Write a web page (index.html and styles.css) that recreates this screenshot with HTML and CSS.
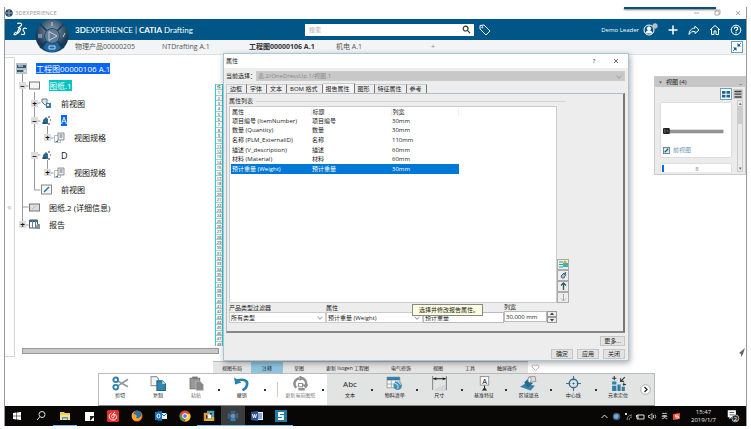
FILE: index.html
```html
<!DOCTYPE html>
<html lang="zh-CN">
<head>
    <meta charset="UTF-8" />
    <meta name="viewport" content="width=device-width, initial-scale=1" />
    <title>3DEXPERIENCE</title>
    <link rel="stylesheet" href="styles.css">
</head>
<body>
    <div class="screen">
        <div class="titlebar">
            <svg class="title-icon" viewBox="0 0 8 8"><circle cx="4" cy="4" r="3.8" fill="#2c4b68"/><path d="M1 4h6M4 1v6" stroke="#8fa9bf"/></svg>
            <span>3DEXPERIENCE</span>
            <div class="accent"></div>
            <svg class="win-controls" viewBox="0 0 60 12" fill="none" stroke="#999" stroke-width=".8"><path d="M8 6h5M50 4l4 4M54 4l-4 4"/><path d="M29 4h4v4h-4zM30 4V3h4v4h-1"/></svg>
        </div>

        <header class="topbar">
            <svg class="ds-logo" viewBox="0 0 16 16" fill="none" stroke="#fff" stroke-width="1.2" stroke-linecap="round"><path d="M5 1.5c3-1 6 .5 3 3L6 6M5.500 6c4-1 3 5-3 7.500-2 .7-2-1 .5-2.500M7 6L4 12"/><path d="M14.500 7c-3-1.500-5 1-3 3s1 4-2.500 3"/></svg>
            <h1><b>3D</b>EXPERIENCE | <b>CATIA</b> Drafting</h1>
            <form class="search">
                <input type="text" aria-label="搜索" placeholder="搜索">
                <button type="button" aria-label="搜索"><svg viewBox="0 0 10 10" fill="none" stroke="#333" stroke-width="1.3"><circle cx="4" cy="4" r="2.7"/><path d="M6 6l3 3"/></svg></button>
            </form>
            <button class="icon-btn tag" aria-label="标签"><svg viewBox="0 0 12 12" fill="none" stroke="#fff"><path d="M1 1.500l4-.5 6 6-4 4-6-6z"/><circle cx="3.300" cy="3.300" r=".6"/></svg></button>
            <div class="user">
                <span>Demo Leader</span>
                <button class="icon-btn avatar" aria-label="用户"><svg viewBox="0 0 15 13" fill="none" stroke="#fff"><circle cx="6" cy="7" r="5"/><circle cx="6" cy="5.500" r="1.700" fill="#fff"/><path d="M3 10c0-3 6-3 6 0z" fill="#fff"/><circle cx="12" cy="3" r="2.400" fill="#bbb" stroke="#ccc" stroke-width=".5"/></svg></button>
                <button class="icon-btn" aria-label="添加"><svg viewBox="0 0 12 12" stroke="#fff" stroke-width="1.500"><path d="M6 1.500v9M1.500 6h9"/></svg></button>
                <button class="icon-btn" aria-label="共享"><svg viewBox="0 0 12 12" fill="none" stroke="#fff"><path d="M7 2l4 4-4 3.500V7.500C4 7 2.500 8.500 1 10.500 1 7 3 4.500 7 4z"/></svg></button>
                <button class="icon-btn" aria-label="主页"><svg viewBox="0 0 12 12" fill="none" stroke="#fff"><path d="M1 6l5-4.500L11 6M2.500 5v5.500h2.500V7h2v3.500h2.500V5"/></svg></button>
                <button class="icon-btn" aria-label="帮助"><svg viewBox="0 0 12 12" fill="none" stroke="#fff"><circle cx="6" cy="6" r="4.800"/><path d="M4.300 4.800c0-2.200 3.400-2.200 3.400 0C7.700 6 6 6 6 7.200M6 8.200v1.200" stroke-width="1.200"/></svg></button>
            </div>
            <svg class="compass" viewBox="0 0 34 34">
                <defs><radialGradient id="ball" cx=".5" cy=".35"><stop offset="0" stop-color="#8aa0b2"/><stop offset=".55" stop-color="#506b82"/><stop offset="1" stop-color="#173955"/></radialGradient></defs>
                <circle cx="17" cy="17" r="16.500" fill="url(#ball)"/>
                <path d="M5 5l7 7M29 5l-7 7M5 29l7-7M29 29l-7-7" stroke="#173955" stroke-width="1.500"/>
                <path d="M8 29Q17 37 26 29L22 23Q17 26 12 23z" fill="#1c6aa5"/>
                <circle cx="17" cy="17" r="7.500" fill="#607c94" stroke="#2b4a64"/>
                <path d="M14 12.500v9l8-4.500z" fill="none" stroke="#d9e4ec" stroke-width=".8"/>
                <path d="M17 3v4M4 15v4M6 15v4M28 18l2-4M14 27h6v3h-6z" fill="none" stroke="#e8eef2" stroke-width=".8"/>
            </svg>
        </header>

        <nav class="doc-tabs">
            <a href="#">物理产品00000205</a>
            <a href="#">NTDrafting A.1</a>
            <a href="#" class="current">工程图00000106 A.1</a>
            <a href="#">机电 A.1</a>
            <button class="add-tab" aria-label="新建选项卡">+</button>
            <button class="restore" aria-label="还原"><svg viewBox="0 0 12 12"><rect x=".5" y=".5" width="11" height="11" fill="#fff" stroke="#6b9cb9"/><path d="M6.500 2v3.500H10zM5.500 10V6.500H2z" fill="#005686"/><path d="M7 5l3-3M5 7l-3 3" stroke="#005686" stroke-width=".8"/></svg></button>
        </nav>

        <main class="workspace">
            <div class="side-strip">«</div>
            <section class="tree-pane">
                <div class="tree-grid">
                    <svg class="tree-lines" width="60" height="173" fill="none" stroke="#999"><path d="M7.500 13v152M7.500 26h6M7.500 147h6M7.500 165h6M19.500 32v98M19.500 43h6M19.500 61h6M19.500 95h6M19.500 130h6M32.500 66v12h6M32.500 100v13h6"/></svg>
                    <ul class="tree">
                        <li class="root"><svg class="ico" viewBox="0 0 11 11"><rect width="11" height="11" fill="#b9c1c6"/><path d="M1 2h9v3H1zM1 7h7v2H1z" fill="#315c78"/><path d="M2 3h5M7 8h3" stroke="#fff"/></svg><span class="picked">工程图00000106 A.1</span></li>
                        <li class="l1"><button class="toggle">−</button><svg class="ico" viewBox="0 0 11 11"><rect x=".5" y="2" width="10" height="7" fill="#f5f5f5" stroke="#777"/></svg><span class="active">图纸.1</span></li>
                        <li class="l2"><button class="toggle">+</button><svg class="ico" viewBox="0 0 11 11"><path d="M1 1h5v6H4L1 4z" fill="#dbe6eb" stroke="#678"/><path d="M5 5h5v5H5z" fill="#3d7d9f"/><path d="M6 6h2v2H6z" fill="#e6eef2"/></svg><span>前视图</span></li>
                        <li class="l2"><button class="toggle">−</button><svg class="ico" viewBox="0 0 11 11"><path d="M2 9V5l3-3 2 2v5z" fill="#2c6a8d"/><path d="M1 8h4M8 1v2M9 5h1M8 8v2" stroke="#234"/></svg><span class="picked letter">A</span></li>
                        <li class="l3"><button class="toggle">+</button><svg class="ico" viewBox="0 0 11 11"><path d="M.5 3.500h6v7h-6z" fill="#fff" stroke="#aaa" stroke-width=".8"/><path d="M4 1h6v7H4z" fill="#e9edf0" stroke="#778" stroke-width=".8"/><path d="M5.500 3h3M5.500 5h3" stroke="#556" stroke-width=".8"/><path d="M1 10l3-2v2z" fill="#35799d"/></svg><span>视图规格</span></li>
                        <li class="l2"><button class="toggle">−</button><svg class="ico" viewBox="0 0 11 11"><path d="M2 9V5l3-3 2 2v5z" fill="#2c6a8d"/><path d="M1 8h4M8 1v2M9 5h1M8 8v2" stroke="#234"/></svg><span class="letter">D</span></li>
                        <li class="l3"><button class="toggle">+</button><svg class="ico" viewBox="0 0 11 11"><path d="M.5 3.500h6v7h-6z" fill="#fff" stroke="#aaa" stroke-width=".8"/><path d="M4 1h6v7H4z" fill="#e9edf0" stroke="#778" stroke-width=".8"/><path d="M5.500 3h3M5.500 5h3" stroke="#556" stroke-width=".8"/><path d="M1 10l3-2v2z" fill="#35799d"/></svg><span>视图规格</span></li>
                        <li class="l2 leaf"><svg class="ico" viewBox="0 0 11 11"><rect x=".5" y="1" width="10" height="9" fill="#f1f5f7" stroke="#888"/><path d="M3 8l5-5" stroke="#2d7299" stroke-width="1.500"/></svg><span>前视图</span></li>
                        <li class="l1 leaf"><svg class="ico" viewBox="0 0 11 11"><rect x=".5" y="2" width="10" height="7" fill="#ddd" stroke="#777"/><path d="M3 7l4-3" stroke="#bbb"/></svg><span>图纸.2 (详细信息)</span></li>
                        <li class="l1"><button class="toggle">+</button><svg class="ico" viewBox="0 0 11 11"><path d="M.5 1h8v8h-8z" fill="#fff" stroke="#556"/><path d="M1 2h8" stroke="#2c6b8c" stroke-width="2"/><path d="M3.500 2v7M6.500 2v7" stroke="#778"/><path d="M8 5h3v5H6z" fill="#81919b"/></svg><span>报告</span></li>
                    </ul>
                </div>
                <div class="h-scroll"></div>
            </section>
            <ol class="ruler" id="ruler"></ol>

            <aside class="views">
                <header>
                    <svg viewBox="0 0 5 5"><path d="M1 1.500h3L2.500 3.500z" fill="#555"/></svg>
                    <h2>视图 (4)</h2>
                    <span>_</span>
                </header>
                <div class="view-modes">
                    <button class="on" aria-label="网格"><svg viewBox="0 0 10 10" fill="#1c638d"><path d="M1 2h3.500v2.700H1zM5.500 2H9v2.700H5.500zM1 5.700h3.500v2.700H1zM5.500 5.700H9v2.700H5.500z"/></svg></button>
                    <button aria-label="列表"><svg viewBox="0 0 10 10" stroke="#444" stroke-width="1.300"><path d="M1.500 2.500h7M1.500 5.200h7M1.500 8h7"/></svg></button>
                </div>
                <div class="views-body">
                    <div class="cards">
                        <div class="card">
                            <svg class="part" viewBox="0 0 66 10"><path d="M6 4h56v3H6z" fill="#999" stroke="#777" stroke-width=".5"/><rect y="2" width="7" height="6" rx="1" fill="#222"/><path d="M2 3v4M4 4l1.500 2" stroke="#aaa" stroke-width=".6"/></svg>
                            <div class="caption"><svg viewBox="0 0 8 8"><rect x=".5" y=".5" width="7" height="7" fill="#d8e6ee" stroke="#678"/><path d="M2 6l4-4" stroke="#135d8a" stroke-width="1.500"/></svg><a href="#">前视图</a></div>
                        </div>
                        <div class="card next"><i></i><span>8</span></div>
                    </div>
                    <div class="v-scroll"><button aria-label="向上">▴</button><div></div><button aria-label="向下">▾</button></div>
                </div>
            </aside>

            <svg class="plane" viewBox="0 0 6 9"><path d="M6 0L0 5l2 1v3l2-3z" fill="#666"/></svg>

            <div class="action-bar">
                <div class="action-tabs">
                    <button>视图布局</button>
                    <button class="on">注释</button>
                    <button>草图</button>
                    <button>更新 Isogen 工程图</button>
                    <button>电气修饰</button>
                    <button>视图</button>
                    <button>工具</button>
                    <button>触屏操作</button>
                    <svg viewBox="0 0 9 7" fill="#fff" stroke="#aaa" stroke-width=".8"><path d="M4.500 6.500L1 3c-.5-2 2-3 3.500-1C6 0 8.500 1 8 3z"/></svg>
                </div>
                <div class="tools">
                    <div class="tools-std">
                        <button class="tool"><svg viewBox="0 0 16 14" fill="none"><path d="M6 5l9 5M6 9l9-6" stroke="#8c979d" stroke-width="1.500"/><circle cx="3.500" cy="3.500" r="2.200" stroke="#2d7fa8" stroke-width="1.800"/><circle cx="3.500" cy="10.500" r="2.200" stroke="#2d7fa8" stroke-width="1.800"/></svg>剪切</button>
                        <button class="tool"><svg viewBox="0 0 16 14"><path d="M1 .5h5l2 2V9H1z" fill="#f4f4f4" stroke="#999"/><path d="M6.500 4.500h5l3 3V13.500h-8z" fill="#2f86b0" stroke="#1f6386"/><path d="M11.500 4.500v3h3z" fill="#bfe0ef"/></svg>复制</button>
                        <button class="tool muted"><svg viewBox="0 0 16 14"><path d="M2 2h9v10H2z" fill="#999" stroke="#777"/><path d="M4 .5h5v2H4z" fill="#777"/><path d="M7.500 5h4l3 3v5.500h-7z" fill="#888" stroke="#ccc" stroke-width=".5"/></svg>粘贴</button>
                        <i class="caret"></i>
                        <button class="tool"><svg viewBox="0 0 16 14" fill="none"><path d="M4 4c9-2 11 2 8 7l-3 2.500" stroke="#2782af" stroke-width="2.500"/><path d="M1 1l1 7 6-2z" fill="#2782af"/></svg>撤销</button>
                        <i class="caret"></i>
                        <i class="sep"></i>
                        <button class="tool muted"><svg viewBox="0 0 16 14" fill="none" stroke="#909090" stroke-width="2.300"><path d="M7 2C2 3 1 8 4 11M9 2c4 1 5 4 4 7M6 12.500h6"/><path d="M7 0l4 2-4 2M10 8l3 3 2-3" fill="#909090" stroke-width="1"/><path d="M6 7h4v3H6z" stroke-width="1"/></svg>更新当前图纸</button>
                        <i class="caret"></i>
                    </div>
                    <div class="tools-ctx">
                        <button class="tool"><strong>Abc</strong>文本</button>
                        <i class="caret"></i>
                        <button class="tool"><svg viewBox="0 0 16 14"><path d="M1 1h12v10H1z" fill="#f7f7f7" stroke="#888" stroke-width=".7"/><path d="M1 1h12v3H1z" fill="#2d7fa8"/><path d="M1 7.500h12M5 4v7M9 4v7" stroke="#999" stroke-width=".7"/><circle cx="11" cy="9" r="4" fill="#438db3"/><path d="M8 7c3 0 4 2 3 5M11 5l3 3" stroke="#bde0ef" fill="none"/></svg>物料清单</button>
                        <i class="caret"></i>
                        <button class="tool"><svg viewBox="0 0 16 14"><path d="M7 10l8-2v6H2z" fill="#d1d7d9"/><path d="M1.500 0v13M14.500 0v13" stroke="#888"/><path d="M2 2.500h12" stroke="#222"/><path d="M2 2.500l3-1.500v3zM14 2.500l-3-1.500v3z" fill="#222"/></svg>尺寸</button>
                        <i class="caret"></i>
                        <button class="tool"><svg viewBox="0 0 16 14"><rect x="4" y=".5" width="8" height="8" fill="#fff" stroke="#888" stroke-width=".8"/><text x="8" y="7" text-anchor="middle" font-size="7">A</text><path d="M8 9v3" stroke="#222"/><path d="M5.500 13.500L8 10.500l2.500 3z" fill="#222"/></svg>基准特征</button>
                        <i class="caret"></i>
                        <button class="tool"><svg viewBox="0 0 16 14"><path d="M0 10l5-3 9 2-4 4.500z" fill="#3484ab"/><path d="M4 6l3-3 5 4-5 4z" fill="#226b93"/><path d="M8 1l6-1 1 5-5 1z" fill="#ddd" stroke="#888" stroke-width=".8"/><ellipse cx="9" cy="3.500" rx="1.500" ry="2.500" fill="#fff" stroke="#888" stroke-width=".8"/></svg>区域填充</button>
                        <i class="caret"></i>
                        <button class="tool"><svg viewBox="0 0 16 14" fill="none" stroke="#356f8d"><circle cx="8" cy="7" r="4" stroke-width="1.300"/><path d="M8 0v4M8 10v4M1 7h4M11 7h4M7 7h2M8 6v2"/></svg>中心线</button>
                        <i class="caret"></i>
                        <button class="tool"><svg viewBox="0 0 16 14" fill="#2d7fa8"><path d="M2 5h4v3H2zM2 9h4v5H2zM7 8h3v6H7zM11 10h3v4h-3z"/><path d="M4 0v4M2 2h4M14 1l-4 4M10 2v3h3M13 6v3M12 8h3" fill="none" stroke="#333"/></svg>元素定位</button>
                        <button class="more-tools" aria-label="更多工具"><svg viewBox="0 0 11 11" fill="none"><circle cx="5.500" cy="5.500" r="4.800" fill="#fff" stroke="#999" stroke-width=".8"/><path d="M4.500 3l2.500 2.500L4.500 8" stroke="#222" stroke-width="1.300"/></svg></button>
                    </div>
                </div>
            </div>

            <div class="dialog" role="dialog" aria-labelledby="dlgTitle">
                <header class="dialog-head">
                    <h2 id="dlgTitle">属性</h2>
                    <button aria-label="帮助">?</button>
                    <button aria-label="关闭窗口"><svg viewBox="0 0 6 6" stroke="#444" stroke-width=".8"><path d="M1 1l4 4M5 1L1 5"/></svg></button>
                </header>
                <div class="dialog-body">
                    <div class="selection">
                        <label for="current">当前选择：</label>
                        <div class="select">
                            <select id="current" disabled><option>表.2/OneDressUp.1/视图.1</option></select>
                        </div>
                    </div>
                    <div class="tabs" role="tablist">
                        <button role="tab">边框</button>
                        <button role="tab">字体</button>
                        <button role="tab">文本</button>
                        <button role="tab">BOM 格式</button>
                        <button role="tab" class="on" aria-selected="true">报告属性</button>
                        <button role="tab">图形</button>
                        <button role="tab">特征属性</button>
                        <button role="tab">参考</button>
                    </div>
                    <div class="pane">
                        <h3>属性列表</h3>
                        <div class="list-row">
                            <div class="list">
                                <table>
                                    <thead><tr><th>属性</th><th>标题</th><th>列宽</th></tr></thead>
                                    <tbody>
                                        <tr><td>项目编号 (ItemNumber)</td><td>项目编号</td><td>30mm</td></tr>
                                        <tr><td>数量 (Quantity)</td><td>数量</td><td>30mm</td></tr>
                                        <tr><td>名称 (PLM_ExternalID)</td><td>名称</td><td>110mm</td></tr>
                                        <tr><td>描述 (V_description)</td><td>描述</td><td>60mm</td></tr>
                                        <tr><td>材料 (Material)</td><td>材料</td><td>60mm</td></tr>
                                        <tr class="selected"><td>预计重量 (Weight)</td><td>预计重量</td><td>30mm</td></tr>
                                    </tbody>
                                </table>
                            </div>
                            <div class="list-actions">
                                <button aria-label="添加"><svg viewBox="0 0 9 9"><path d="M0 2h4M0 4.500h4M0 7h4" stroke="#22a4a0"/><path d="M4 3h5v4H4z" fill="#35b7ac"/><circle cx="6" cy="2" r="1.500" fill="#e0a62a"/></svg></button>
                                <button aria-label="移除"><svg viewBox="0 0 9 9" fill="none"><path d="M2 5l3-3 2 1-2 4H3z" fill="#a9c3db" stroke="#3b6187"/><path d="M7 1L5 4" stroke="#3b6187"/></svg></button>
                                <button aria-label="上移"><svg viewBox="0 0 9 9" fill="none" stroke="#245a59"><path d="M4.500 1v7M2 3.500l2.500-2.500L7 3.500" stroke-width="1.300"/></svg></button>
                                <button aria-label="下移"><svg viewBox="0 0 9 9" fill="none" stroke="#aaa"><path d="M4.500 1v7M2 5.500L4.500 8 7 5.500"/></svg></button>
                            </div>
                        </div>
                        <div class="fields">
                            <div class="field">
                                <label for="filter">产品类型过滤器</label>
                                <div class="select"><select id="filter"><option>所有类型</option></select></div>
                            </div>
                            <div class="field">
                                <label for="attr">属性</label>
                                <div class="select"><select id="attr"><option>预计重量 (Weight)</option></select></div>
                            </div>
                            <div class="field caption-field">
                                <input type="text" aria-label="标题" value="预计重量">
                                <div class="tooltip" role="tooltip">选择并修改报告属性。</div>
                            </div>
                            <div class="field width-field">
                                <label for="colWidth">列宽</label>
                                <div class="spin">
                                    <input type="text" id="colWidth" value="30.000 mm">
                                    <div class="spin-btns">
                                        <button aria-label="增加"><svg viewBox="0 0 8 4"><path d="M4 .5L6 3H2z" fill="#333"/></svg></button>
                                        <button aria-label="减少"><svg viewBox="0 0 8 4"><path d="M4 3.500L6 1H2z" fill="#333"/></svg></button>
                                    </div>
                                </div>
                            </div>
                        </div>
                    </div>
                    <div class="buttons"><button>更多...</button></div>
                    <div class="buttons"><button>确定</button><button>应用</button><button>关闭</button></div>
                </div>
            </div>
        </main>

        <footer class="taskbar">
            <div class="apps">
                <button aria-label="开始"><svg viewBox="0 0 12 12" fill="#fff"><path d="M2 3l3.500-.5v3.200H2zM6 2.400L10 2v3.700H6zM2 6.300h3.500v3.200L2 9zM6 6.300h4V10l-4-.4z"/></svg></button>
                <button aria-label="搜索"><svg viewBox="0 0 12 12" fill="none" stroke="#ddd"><circle cx="7" cy="4.500" r="3"/><path d="M4.800 6.800L2 10"/></svg></button>
                <button aria-label="资源管理器" class="open"><svg viewBox="0 0 12 12"><path d="M1 2h4l1 1h5v7H1z" fill="#f3cc58"/><path d="M1 5h10v5H1z" fill="#fbe08e"/><path d="M3 7h6v3H8V8.500H4V10H3z" fill="#4b9bd0"/></svg></button>
                <button aria-label="便笺"><svg viewBox="0 0 12 12"><path d="M2 2h9v9H2z" fill="#fff"/><path d="M11 6H7v5l4-4z" fill="#222"/></svg></button>
                <button aria-label="音乐"><svg viewBox="0 0 12 12"><rect width="12" height="12" rx="1.500" fill="#e72d2c"/><path d="M4.500 3C1 4 1.500 10 6 10c5 0 4.500-6 .5-5.500C3.500 5 4.500 8 6 8s1.500-2 .5-5L8 2" fill="none" stroke="#fff"/></svg></button>
                <button aria-label="Firefox"><svg viewBox="0 0 12 12"><circle cx="6" cy="6" r="5.500" fill="#e67a25"/><circle cx="6.500" cy="4.500" r="3.700" fill="#2d6eb0"/><path d="M1 3c2 1 3 1 5 3l-1 2c2 1 4 0 5-2 1 5-8 7-9 1z" fill="#f3a52f"/></svg></button>
                <button aria-label="Outlook"><svg viewBox="0 0 12 12"><path d="M6 3h6v6H6z" fill="#e8f3fb"/><path d="M6 3l3 3 3-3" fill="none" stroke="#1674bf"/><path d="M0 2l7-1v10l-7-1z" fill="#1674bf"/><ellipse cx="3.500" cy="6" rx="1.500" ry="2" fill="none" stroke="#fff"/></svg></button>
                <button aria-label="Chrome"><svg viewBox="0 0 12 12"><circle cx="6" cy="6" r="5.500" fill="#e04b3b"/><path d="M1 4l4.500 7.500C1 11 0 7 1 4z" fill="#31a354"/><path d="M6 4h5c2 5-2 8-5.500 7.500L8 7z" fill="#f3cd3c"/><circle cx="6" cy="6" r="2.400" fill="#4086de" stroke="#fff"/></svg></button>
                <button aria-label="虚拟机" class="open"><svg viewBox="0 0 12 12" fill="none" stroke-width="2.400"><path d="M2 11V4h5" stroke="#e59b25"/><path d="M4 2h6v6" stroke="#46a3c4"/><path d="M3 9.800h7V7" stroke="#d9b32f"/><path d="M4.500 4.500h4v4h-4z" fill="#fff" stroke="none"/></svg></button>
                <button aria-label="3DEXPERIENCE" class="open front"><svg viewBox="0 0 12 12"><circle cx="6" cy="6" r="5.500" fill="#435e78"/><path d="M2 2l8 8M10 2l-8 8" stroke="#1d3145"/><circle cx="6" cy="6" r="2.300" fill="#7390a8"/><path d="M3 10q3 2 6 0L8 8H4z" fill="#2e83bd"/></svg></button>
                <button aria-label="Word" class="open"><svg viewBox="0 0 12 12"><path d="M6 2h6v8H6z" fill="#eef3fa"/><path d="M7 4h4M7 6h4M7 8h4" stroke="#2b579a"/><path d="M0 2l7-1v10l-7-1z" fill="#2b579a"/><path d="M1.500 4l1 4 1-3.500 1 3.500 1-4" fill="none" stroke="#fff" stroke-width=".9"/></svg></button>
                <button aria-label="Snagit" class="open"><svg viewBox="0 0 12 12"><path d="M0 0h12v12H0z" fill="#1f7ba0"/><path d="M9 3H4v3h4v3H3" fill="none" stroke="#fff" stroke-width="1.800"/></svg></button>
            </div>
            <div class="tray">
                <svg viewBox="0 0 9 9" fill="none" stroke="#ddd"><path d="M1.500 6l3-3 3 3"/></svg>
                <svg viewBox="0 0 9 9"><circle cx="4.500" cy="4.500" r="3.800" fill="#315d8d"/><path d="M2 3l3-1 2 2-2 3-3-1z" fill="#87a7c6"/></svg>
                <svg viewBox="0 0 9 9" fill="none" stroke="#888"><path d="M3 8c0-3 2-5 5-5M5 8c0-1.500 1-3 3-3"/><path d="M1 1l2 2M3 1L1 3" stroke="#ddd"/></svg>
                <svg viewBox="0 0 9 9" fill="none" stroke="#ddd"><path d="M1 3h7v4H1zM2 3v4"/><path d="M.5 3v2"/></svg>
                <svg viewBox="0 0 9 9" fill="none" stroke="#ddd" stroke-width=".8"><path d="M.5 3.500h1.500l2-2v6l-2-2H.5zM5.500 3v3M7 2.500q1.500 2 0 4"/></svg>
                <span>英</span>
                <svg viewBox="0 0 9 9"><path d="M1 2l7-1v6l-7 1z" fill="#ea4a2a"/><path d="M6.500 3h-3v1.500h3V6h-3" fill="none" stroke="#fff" stroke-width=".8"/></svg>
                <time>15:47<br>2019/1/7</time>
                <svg class="notify" viewBox="0 0 11 12"><path d="M1 1h7v6H4L2.500 9V7H1z" fill="#fff"/><path d="M2.500 3h4M2.500 5h4" stroke="#444" stroke-width=".7"/><circle cx="7.500" cy="8" r="3" fill="#333" stroke="#ccc" stroke-width=".7"/><text x="7.500" y="10" font-size="5" fill="#fff" text-anchor="middle">2</text></svg>
            </div>
        </footer>
    </div>
    <script>
      const ruler = document.getElementById('ruler');

      for (let i = 0; i <= 48; i++) {
        const row = document.createElement('li');
        row.textContent = i === 0 ? '件' : i;
        ruler.appendChild(row);
      }
    </script>
</body>
</html>
```
FILE: styles.css
```css
* {
    box-sizing: border-box;
}
body {
    margin: 0;
    height: 100vh;
    padding: 7px 4px 3px;
    background-color: #fff;
    font-family: "Open Sans", "Noto Sans CJK SC", sans-serif;
    font-size: 6px;
    line-height: 8px;
    color: #222;
    overflow: hidden;
}
button,
input,
select {
    font: inherit;
    color: inherit;
    margin: 0;
    padding: 0;
    border: none;
    border-radius: 0;
    background: none;
}
a {
    color: inherit;
    text-decoration: none;
}
h1,
h2,
h3 {
    margin: 0;
    font-size: inherit;
    font-weight: normal;
}
ul,
ol {
    list-style: none;
    margin: 0;
    padding: 0;
}
svg {
    display: block;
    flex: none;
}
.screen {
    height: 100%;
    display: flex;
    flex-direction: column;
    border-left: 1px solid #999;
    border-right: 1px solid #999;
}

/* window title */
.titlebar {
    height: 12px;
    display: flex;
    align-items: center;
    gap: 2px;
    color: #999;
}
.title-icon {
    width: 8px;
    height: 8px;
}
.accent {
    width: 92px;
    height: 2px;
    margin-left: auto;
    margin-right: -32px;
    align-self: flex-start;
    background-color: #0b4d7c;
    box-shadow: 0 1px 2px #777;
}
.win-controls {
    width: 60px;
    height: 12px;
}

/* top bar */
.topbar {
    position: relative;
    height: 21px;
    display: flex;
    align-items: center;
    padding: 0 4px 0 8px;
    background-color: #005686;
    color: #fff;
}
.ds-logo {
    width: 15px;
    height: 15px;
}
.topbar h1 {
    width: 230px;
    margin-left: 47px;
    font-family: Lato, "Open Sans", sans-serif;
    font-size: 8px;
}
.search {
    display: flex;
    width: 169px;
    height: 12px;
    background-color: #fff;
}
.search input {
    flex: 1;
    min-width: 0;
    padding-left: 4px;
    color: #333;
}
.search input::placeholder {
    color: #aaa;
}
.search button {
    width: 15px;
}
.search svg {
    width: 9px;
    height: 9px;
    margin: auto;
}
.icon-btn {
    width: 12px;
    height: 12px;
}
.icon-btn svg {
    width: 12px;
    height: 12px;
}
.tag {
    margin-left: 5px;
}
.user {
    display: flex;
    align-items: center;
    gap: 9px;
    margin-left: auto;
}
.user span {
    margin-right: -5px;
}
.avatar,
.avatar svg {
    width: 15px;
    height: 13px;
}
.compass {
    position: absolute;
    left: 30px;
    top: 0;
    width: 34px;
    height: 34px;
    z-index: 1;
}

/* document tabs */
.doc-tabs {
    height: 15px;
    display: grid;
    grid-template-columns: repeat(4, 87px) 20px 1fr;
    align-items: center;
    padding: 0 3px 0 70px;
    background-color: #f2f4f6;
    border-bottom: 1px solid #dde1e5;
    font-size: 7px;
    color: #555;
    white-space: nowrap;
}
.doc-tabs .current {
    font-weight: bold;
    color: #333;
}
.add-tab {
    color: #888;
}
.restore {
    justify-self: end;
}
.restore svg {
    width: 12px;
    height: 12px;
}

/* workspace */
.workspace {
    position: relative;
    flex: 1;
    min-height: 0;
    display: flex;
}
.side-strip {
    width: 10px;
    height: 300px;
    margin-top: 2px;
    display: flex;
    align-items: center;
    justify-content: center;
    border: 1px solid #d5d5d5;
    border-left: none;
    font-size: 9px;
    color: #bbb;
}
.tree-pane {
    width: 200px;
    padding-top: 5px;
}
.tree-grid {
    display: grid;
    height: 173px;
}
.tree-lines,
.tree {
    grid-area: 1 / 1;
}
.tree {
    position: relative;
    display: flex;
    flex-direction: column;
    font-size: 8px;
    line-height: 11px;
    color: #111;
}
.tree li {
    flex: 1;
    display: flex;
    align-items: center;
}
.tree .root {
    padding-left: 1px;
}
.tree .l1 {
    padding-left: 4px;
}
.tree .l2 {
    padding-left: 16px;
}
.tree .l3 {
    padding-left: 29px;
}
.tree .l1.leaf {
    padding-left: 14px;
}
.tree .l2.leaf {
    padding-left: 26px;
}
.toggle {
    display: flex;
    align-items: center;
    justify-content: center;
    width: 7px;
    height: 7px;
    margin-right: 3px;
    background-color: #ddd;
    font-size: 8px;
    font-weight: bold;
    line-height: 7px;
}
.ico {
    width: 11px;
    height: 11px;
    margin-right: 9px;
}
.letter {
    font-size: 9px;
}
.picked {
    background-color: #0a66f0;
    color: #fff;
}
.active {
    background-color: #00c5c0;
    color: #fff;
}
.h-scroll {
    height: 6px;
    margin: 115px -4px 0 7px;
    background-color: #c8c8c8;
    border: 1px solid #999;
}
.ruler {
    width: 8px;
    height: 262px;
    margin-top: 29px;
    display: flex;
    flex-direction: column;
    border-left: 1px solid #3cc;
    border-right: 1px solid #3cc;
    font-size: 4px;
    line-height: 5px;
    text-align: center;
}
.ruler li {
    flex: 1;
    min-height: 0;
    border-top: 1px solid #8edcd9;
}

/* views panel */
.views {
    position: absolute;
    right: 0;
    top: 21px;
    width: 92px;
    background-color: #ebebeb;
    border: 1px solid #ccc;
}
.views header {
    height: 10px;
    display: flex;
    align-items: center;
    gap: 3px;
    padding: 0 3px;
    background-color: #c6c6c6;
}
.views header svg {
    width: 5px;
    height: 5px;
}
.views header span {
    margin-left: auto;
}
.view-modes {
    display: flex;
    justify-content: flex-end;
    gap: 2px;
    padding: 2px 2px 0;
}
.view-modes button {
    width: 10px;
    height: 10px;
    background-color: #ccc;
}
.view-modes .on {
    background-color: #fff;
    outline: 1px solid #6ba2c4;
}
.views-body {
    height: 75px;
    display: flex;
    gap: 5px;
    padding: 1px 2px 2px 5px;
}
.cards {
    flex: 1;
    overflow: hidden;
    display: flex;
    flex-direction: column;
    gap: 5px;
    padding-top: 2px;
}
.card {
    height: 56px;
    flex: none;
    padding: 23px 4px 0 2px;
    background-color: #fff;
    border: 1px solid #ddd;
    border-radius: 2px;
}
.part {
    width: 100%;
    height: 10px;
}
.caption {
    display: flex;
    align-items: center;
    gap: 3px;
    margin-top: 10px;
    color: #6d9ab5;
}
.caption svg {
    width: 7px;
    height: 7px;
}
.card.next {
    display: flex;
    padding: 1px;
    color: #888;
}
.card.next i {
    width: 2px;
    height: 8px;
    background-color: #0a66f0;
}
.card.next span {
    margin: 0 auto;
}
.v-scroll {
    width: 6px;
    display: flex;
    flex-direction: column;
    border: 1px solid #ccc;
}
.v-scroll button {
    height: 5px;
    font-size: 5px;
    line-height: 5px;
    color: #666;
}
.v-scroll div {
    height: 18px;
    margin-bottom: auto;
    background-color: #ccc;
}
.plane {
    position: absolute;
    right: 1px;
    bottom: 49px;
    width: 6px;
    height: 9px;
}

/* action bar */
.action-bar {
    position: absolute;
    left: 93px;
    bottom: 0;
    width: 557px;
    font-size: 5px;
}
.action-tabs {
    display: flex;
    height: 12px;
    margin-left: 115px;
}
.action-tabs button {
    padding: 0 11px;
    background-color: #e4e4e4;
    border-top: 1px solid #bbb;
}
.action-tabs button:first-child {
    padding: 0 9px;
}
.action-tabs button.on {
    background-color: #8ec3e0;
}
.action-tabs svg {
    width: 9px;
    height: 7px;
    margin: 3px 0 0 3px;
}
.tools {
    display: flex;
    height: 33px;
    border: 1px solid #bbb;
    border-bottom-color: #888;
    background-color: #e2e4e4;
}
.tools-std,
.tools-ctx {
    display: flex;
    align-items: center;
}
.tools-std {
    width: 228px;
    padding-left: 2px;
    background-color: #fff;
}
.tools-ctx {
    flex: 1;
    padding-left: 4px;
}
.tool {
    width: 38px;
    display: flex;
    flex-direction: column;
    align-items: center;
    gap: 1px;
    padding-bottom: 5px;
    line-height: 7px;
    white-space: nowrap;
}
.tool svg {
    width: 17px;
    height: 15px;
}
.tool strong {
    height: 15px;
    font-size: 8px;
    line-height: 15px;
    font-weight: normal;
}
.tool.muted {
    color: #777;
}
.caret {
    flex: 1;
    height: 2px;
    background: linear-gradient(#333, #333) center / 2px 2px no-repeat;
}
.sep {
    width: 1px;
    height: 15px;
    margin: 0 3px 0 9px;
    background-color: #ccc;
}
.more-tools {
    margin: 0 3px;
}
.more-tools svg {
    width: 11px;
    height: 11px;
}

/* properties dialog */
.dialog {
    position: absolute;
    left: 218px;
    top: -2px;
    width: 406px;
    background-color: #ededed;
    border: 1px solid #a9c6d8;
    box-shadow: 1px 2px 6px rgba(0,0,0,0.35);
    z-index: 2;
}
.dialog-head {
    display: flex;
    align-items: center;
    height: 14px;
    padding: 0 4px 0 2px;
    background-color: #fff;
}
.dialog-head h2 {
    margin-right: auto;
}
.dialog-head button {
    width: 16px;
    margin-left: 6px;
}
.dialog-head svg {
    width: 6px;
    height: 6px;
    margin: auto;
}
.dialog-body {
    padding: 3px 3px 1px 2px;
}
.selection {
    display: flex;
    height: 10px;
}
.selection label {
    width: 30px;
    line-height: 10px;
    white-space: nowrap;
}
.select {
    flex: 1;
    min-width: 0;
    position: relative;
    display: flex;
    background-color: #fff;
    border: 1px solid #ccc;
}
.select::after {
    content: "";
    position: absolute;
    right: 3px;
    top: 2px;
    width: 3px;
    height: 3px;
    border: solid #aaa;
    border-width: 0 1px 1px 0;
    transform: rotate(45deg);
}
.select select {
    width: 100%;
    padding-left: 1px;
    appearance: none;
}
.selection .select {
    background-color: #c8c8c8;
}
.selection select {
    color: #888;
    opacity: 1;
}
.tabs {
    display: flex;
    align-items: flex-end;
    height: 12px;
}
.tabs button {
    height: 9px;
    padding: 0 4px 0 3px;
    border-top: 1px solid #ccc;
    border-right: 1px solid #777;
}
.tabs button:first-child {
    border-left: 1px solid #ccc;
}
.tabs .on {
    height: 10px;
    background-color: #f5f5f5;
}
.pane {
    padding: 3px 2px 8px;
    border: 1px solid #b5bcc4;
    border-right: 2px solid #777;
    border-bottom: 2px solid #888;
}
.pane h3 {
    display: flex;
    align-items: center;
    gap: 3px;
}
.pane h3::after {
    content: "";
    width: 310px;
    height: 1px;
    background-color: #d5d5d5;
}
.list-row {
    display: flex;
    align-items: flex-end;
    margin-top: 1px;
}
.list {
    width: 328px;
    height: 197px;
    padding: 1px;
    background-color: #fff;
    border: 1px solid #ccc;
}
.list table {
    width: 228px;
    height: 66px;
    border-collapse: collapse;
    table-layout: fixed;
    text-align: left;
}
.list th,
.list td {
    padding: 0 1px;
    font-weight: normal;
    white-space: nowrap;
}
.list th {
    border-right: 1px solid #eee;
}
.list th:nth-child(-n+2) {
    width: 80px;
}
.selected {
    background-color: #0078d7;
    color: #fff;
}
.list-actions {
    display: flex;
    flex-direction: column;
}
.list-actions button {
    width: 12px;
    height: 11px;
    border: 1px solid #aaa;
}
.list-actions svg {
    width: 9px;
    height: 9px;
    margin: auto;
}
.fields {
    display: flex;
    align-items: flex-end;
    width: 328px;
}
.field {
    width: 97px;
}
.field label {
    display: block;
}
.field .select,
.field input {
    height: 11px;
}
.field input {
    width: 100%;
    padding-left: 1px;
    background-color: #fff;
    border: 1px solid #bbb;
}
.caption-field {
    position: relative;
    width: 81px;
}
.width-field {
    width: 53px;
}
.spin {
    display: flex;
}
.spin input {
    flex: 1;
    min-width: 0;
}
.spin-btns {
    width: 10px;
    display: flex;
    flex-direction: column;
}
.spin-btns button {
    flex: 1;
    border: 1px solid #999;
}
.spin-btns svg {
    width: 8px;
    height: 4px;
}
.tooltip {
    position: absolute;
    left: -11px;
    top: -8px;
    width: 71px;
    height: 12px;
    padding-left: 6px;
    background-color: #ffffe1;
    border: 1px solid #888;
    line-height: 10px;
    white-space: nowrap;
}
.buttons {
    display: flex;
    justify-content: flex-end;
    gap: 4px;
    margin-top: 3px;
}
.buttons button {
    min-width: 22px;
    height: 10px;
    padding: 0 3px;
    background-color: #e3e3e3;
    border: 1px solid #c5c5c5;
}

/* taskbar */
.taskbar {
    display: flex;
    justify-content: space-between;
    height: 20px;
    background-color: #080706;
    color: #eee;
}
.apps {
    display: flex;
}
.apps button {
    width: 24px;
    border-bottom: 1px solid transparent;
}
.apps svg {
    width: 12px;
    height: 12px;
    margin: auto;
}
.apps .open {
    border-bottom-color: #76b9ed;
}
.apps .front {
    background-color: #3a3c3e;
}
.tray {
    display: flex;
    align-items: center;
    gap: 3px;
    padding-right: 6px;
}
.tray svg {
    width: 9px;
    height: 9px;
}
.tray span {
    width: 9px;
    text-align: center;
}
.tray time {
    width: 39px;
    text-align: center;
}
.tray .notify {
    width: 14px;
    height: 14px;
}
```
